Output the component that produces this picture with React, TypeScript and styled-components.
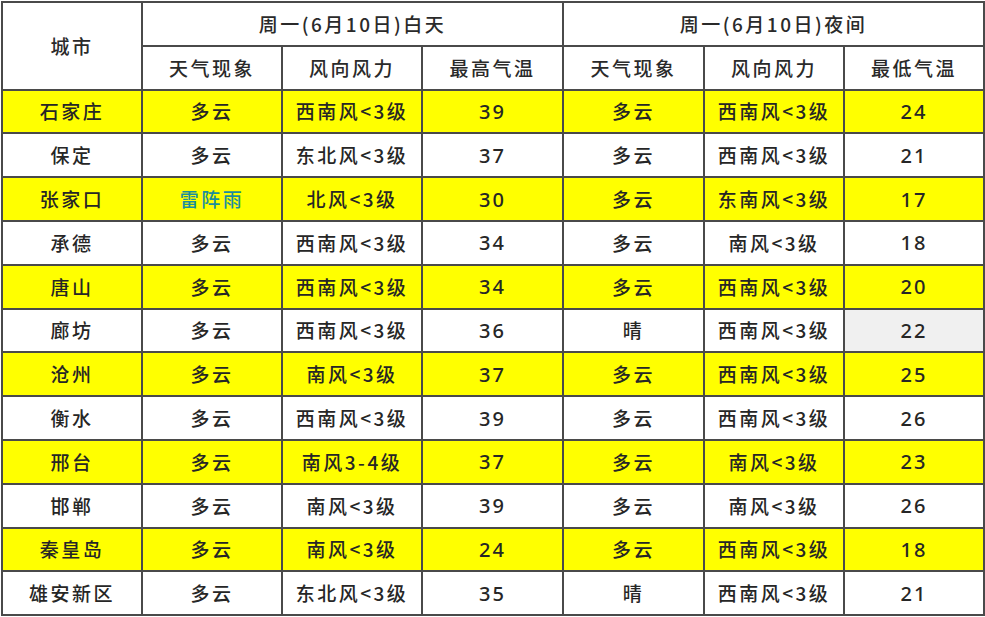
import React from "react";
import styled, { createGlobalStyle } from "styled-components";

const Global = createGlobalStyle`
  html, body { margin: 0; padding: 0; background: #ffffff; }
  body { font-family: "Noto Sans CJK SC", "Noto Sans", sans-serif; }
`;

const Frame = styled.div`
  padding: 1px;
  width: 985px;
  height: 617px;
  box-sizing: border-box;
  overflow: hidden;
`;

const Table = styled.table`
  width: 982px;
  height: 614px;
  table-layout: fixed;
  border-collapse: collapse;
  background: #ffffff;
`;

const Row = styled.tr<{ $yellow?: boolean }>`
  height: 43.8px;
  background: ${(p) => (p.$yellow ? "#ffff00" : "#ffffff")};
`;

const HeadCell = styled.th`
  border: 2px solid #4a4a4a;
  font-weight: 500;
  font-size: 19px;
  line-height: 24px;
  letter-spacing: 2.5px;
  color: #2a2a2a;
  text-align: center;
  vertical-align: middle;
  padding: 0;
  background: #ffffff;
`;

const Cell = styled.td<{ $color?: string; $bg?: string }>`
  border: 2px solid #4a4a4a;
  font-weight: 500;
  font-size: 19px;
  line-height: 24px;
  letter-spacing: 2.5px;
  color: ${(p) => p.$color || "#262626"};
  text-align: center;
  vertical-align: middle;
  padding: 0;
  background: ${(p) => p.$bg || "transparent"};
`;

const Num = styled.span`
  font-family: "Noto Sans", "Noto Sans CJK SC", sans-serif;
  font-size: 20px;
  font-weight: 500;
  letter-spacing: 2px;
`;

type R = {
  city: string;
  dW: string;
  dWind: string;
  hi: string;
  nW: string;
  nWind: string;
  lo: string;
  yellow?: boolean;
  dColor?: string;
  loBg?: string;
};

const rows: R[] = [
  { city: "石家庄", dW: "多云", dWind: "西南风<3级", hi: "39", nW: "多云", nWind: "西南风<3级", lo: "24", yellow: true },
  { city: "保定", dW: "多云", dWind: "东北风<3级", hi: "37", nW: "多云", nWind: "西南风<3级", lo: "21" },
  { city: "张家口", dW: "雷阵雨", dWind: "北风<3级", hi: "30", nW: "多云", nWind: "东南风<3级", lo: "17", yellow: true, dColor: "#1b8e9c" },
  { city: "承德", dW: "多云", dWind: "西南风<3级", hi: "34", nW: "多云", nWind: "南风<3级", lo: "18" },
  { city: "唐山", dW: "多云", dWind: "西南风<3级", hi: "34", nW: "多云", nWind: "西南风<3级", lo: "20", yellow: true },
  { city: "廊坊", dW: "多云", dWind: "西南风<3级", hi: "36", nW: "晴", nWind: "西南风<3级", lo: "22", loBg: "#f0f0f0" },
  { city: "沧州", dW: "多云", dWind: "南风<3级", hi: "37", nW: "多云", nWind: "西南风<3级", lo: "25", yellow: true },
  { city: "衡水", dW: "多云", dWind: "西南风<3级", hi: "39", nW: "多云", nWind: "西南风<3级", lo: "26" },
  { city: "邢台", dW: "多云", dWind: "南风3-4级", hi: "37", nW: "多云", nWind: "南风<3级", lo: "23", yellow: true },
  { city: "邯郸", dW: "多云", dWind: "南风<3级", hi: "39", nW: "多云", nWind: "南风<3级", lo: "26" },
  { city: "秦皇岛", dW: "多云", dWind: "南风<3级", hi: "24", nW: "多云", nWind: "西南风<3级", lo: "18", yellow: true },
  { city: "雄安新区", dW: "多云", dWind: "东北风<3级", hi: "35", nW: "晴", nWind: "西南风<3级", lo: "21" },
];

const widths = [140, 140, 140, 141, 141, 140, 140];

export default function App() {
  return (
    <>
      <Global />
      <Frame>
        <Table>
          <colgroup>
            {widths.map((w, i) => (
              <col key={i} style={{ width: w }} />
            ))}
          </colgroup>
          <thead>
            <Row>
              <HeadCell rowSpan={2}>城市</HeadCell>
              <HeadCell colSpan={3}>周一(6月10日)白天</HeadCell>
              <HeadCell colSpan={3}>周一(6月10日)夜间</HeadCell>
            </Row>
            <Row>
              <HeadCell>天气现象</HeadCell>
              <HeadCell>风向风力</HeadCell>
              <HeadCell>最高气温</HeadCell>
              <HeadCell>天气现象</HeadCell>
              <HeadCell>风向风力</HeadCell>
              <HeadCell>最低气温</HeadCell>
            </Row>
          </thead>
          <tbody>
            {rows.map((r) => (
              <Row key={r.city} $yellow={r.yellow}>
                <Cell>{r.city}</Cell>
                <Cell $color={r.dColor}>{r.dW}</Cell>
                <Cell>{r.dWind}</Cell>
                <Cell><Num>{r.hi}</Num></Cell>
                <Cell>{r.nW}</Cell>
                <Cell>{r.nWind}</Cell>
                <Cell $bg={r.loBg}><Num>{r.lo}</Num></Cell>
              </Row>
            ))}
          </tbody>
        </Table>
      </Frame>
    </>
  );
}
